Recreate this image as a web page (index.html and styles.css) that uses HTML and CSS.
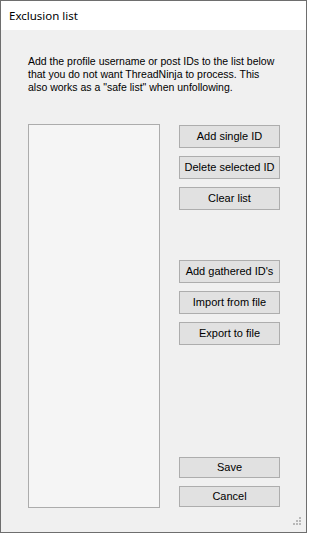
FILE: index.html
```html
<!DOCTYPE html>
<html>
<head>
<meta charset="utf-8">
<link rel="stylesheet" href="styles.css">
</head>
<body>
<div class="window">
  <div class="titlebar">Exclusion list</div>
  <div class="content">
    <p class="desc">Add the profile username or post IDs to the list below<br>that you do not want ThreadNinja to process. This<br>also works as a "safe list" when unfollowing.</p>
    <div class="main">
      <div class="listbox"></div>
      <div class="buttons">
        <div class="group">
          <button class="btn">Add single ID</button>
          <button class="btn">Delete selected ID</button>
          <button class="btn">Clear list</button>
        </div>
        <div class="group group-mid">
          <button class="btn">Add gathered ID's</button>
          <button class="btn">Import from file</button>
          <button class="btn">Export to file</button>
        </div>
        <div class="group group-end">
          <button class="btn btn-small">Save</button>
          <button class="btn btn-small">Cancel</button>
        </div>
      </div>
    </div>
  </div>
  <svg class="grip" width="12" height="12" viewBox="0 0 12 12">
    <rect x="8" y="0" width="2" height="2" fill="#b8b8b8"/>
    <rect x="5" y="3" width="2" height="2" fill="#b8b8b8"/>
    <rect x="8" y="3" width="2" height="2" fill="#b8b8b8"/>
    <rect x="2" y="6" width="2" height="2" fill="#b8b8b8"/>
    <rect x="5" y="6" width="2" height="2" fill="#b8b8b8"/>
    <rect x="8" y="6" width="2" height="2" fill="#b8b8b8"/>
  </svg>
</div>
</body>
</html>
```
FILE: styles.css
```css
html, body {
  margin: 0;
  padding: 0;
}
body {
  font-family: "Liberation Sans", Arial, sans-serif;
  font-size: 11px;
  color: #000;
}
.window {
  position: relative;
  width: 307px;
  height: 533px;
  box-sizing: border-box;
  border: 1px solid #6e6e6e;
  background: #f0f0f0;
  display: flex;
  flex-direction: column;
}
.titlebar {
  height: 29px;
  flex: none;
  background: #ffffff;
  display: flex;
  align-items: center;
  padding-left: 8px;
  font-family: "Noto Sans", "Liberation Sans", sans-serif;
  font-size: 11.5px;
  color: #000;
}
.content {
  flex: 1;
  padding: 25px 0 0 27px;
}
.desc {
  margin: 0;
  line-height: 13px;
  font-size: 10.5px;
  white-space: nowrap;
}
.main {
  display: flex;
  gap: 19px;
  margin-top: 30px;
}
.listbox {
  width: 132px;
  height: 384px;
  box-sizing: border-box;
  border: 1px solid #acacac;
  background: #f5f5f5;
}
.buttons {
  display: flex;
  flex-direction: column;
  height: 384px;
  padding-top: 1px;
  box-sizing: border-box;
}
.group {
  display: flex;
  flex-direction: column;
  gap: 8px;
}
.group-mid {
  margin-top: 50px;
}
.group-end {
  margin-top: auto;
  padding-bottom: 1px;
}
.btn {
  width: 101px;
  height: 23px;
  box-sizing: border-box;
  margin: 0;
  padding: 0 0 2px 0;
  border: 1px solid #adadad;
  background: #e1e1e1;
  font-family: "Liberation Sans", Arial, sans-serif;
  font-size: 11px;
  color: #000;
  text-align: center;
  white-space: nowrap;
}
.btn-small {
  height: 21px;
}
.grip {
  position: absolute;
  right: 3px;
  bottom: 3px;
}
```
